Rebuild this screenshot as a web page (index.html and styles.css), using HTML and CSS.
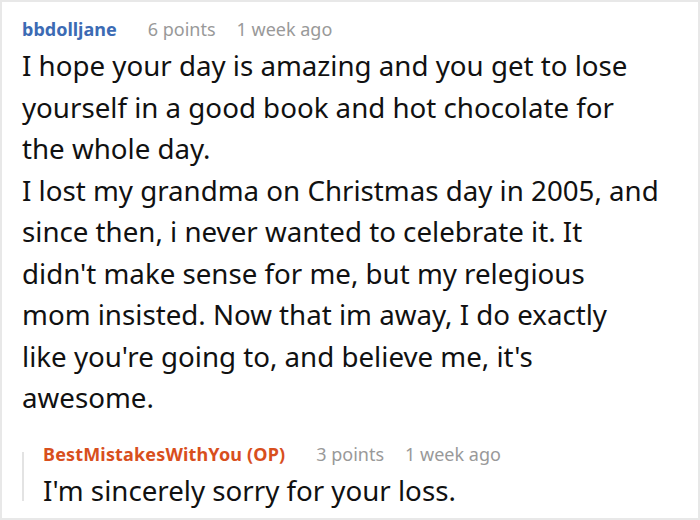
FILE: index.html
```html
<!DOCTYPE html>
<html>
<head>
<meta charset="utf-8">
<link rel="stylesheet" href="styles.css">
</head>
<body>
<div class="frame">
  <div class="comment">
    <div class="meta">
      <span class="author">bbdolljane</span>
      <span class="info">6 points</span>
      <span class="info">1 week ago</span>
    </div>
    <div class="text">
      <p>I hope your day is amazing and you get to lose yourself in a good book and hot chocolate for the whole day.</p>
      <p>I lost my grandma on Christmas day in 2005, and since then, i never wanted to celebrate it. It didn't make sense for me, but my relegious mom insisted. Now that im away, I do exactly like you're going to, and believe me, it's awesome.</p>
    </div>
    <div class="reply">
      <div class="meta">
        <span class="author op">BestMistakesWithYou (OP)</span>
        <span class="info">3 points</span>
        <span class="info">1 week ago</span>
      </div>
      <div class="text">
        <p>I'm sincerely sorry for your loss.</p>
      </div>
    </div>
  </div>
</div>
</body>
</html>
```
FILE: styles.css
```css
html, body {
  margin: 0;
  padding: 0;
  background: #fff;
}
.frame {
  box-sizing: border-box;
  width: 700px;
  height: 520px;
  border: 2px solid #e8e8e8;
  font-family: "Noto Sans", sans-serif;
  color: #111;
  overflow: hidden;
}
.comment {
  padding: 14px 0 0 20px;
}
.meta {
  display: flex;
  align-items: baseline;
  gap: 21px;
  font-size: 18px;
  line-height: 27px;
}
.author {
  color: #3c6bb4;
  font-weight: 700;
  margin-right: 10px;
}
.author.op {
  color: #d84f1d;
  letter-spacing: 0.16px;
}
.info {
  color: #999;
}
.text {
  width: 636.8px;
  font-size: 27.7px;
  line-height: 1.5;
  margin-top: 2px;
}
.text p {
  margin: 0;
}
.reply {
  display: flow-root;
  margin-top: 33px;
  padding-left: 19px;
  border-left: 2px solid #e3e3e3;
}
.reply .meta {
  margin-top: -10.5px;
}
.reply .text {
  line-height: 22px;
  margin-top: 10.75px;
}
```
